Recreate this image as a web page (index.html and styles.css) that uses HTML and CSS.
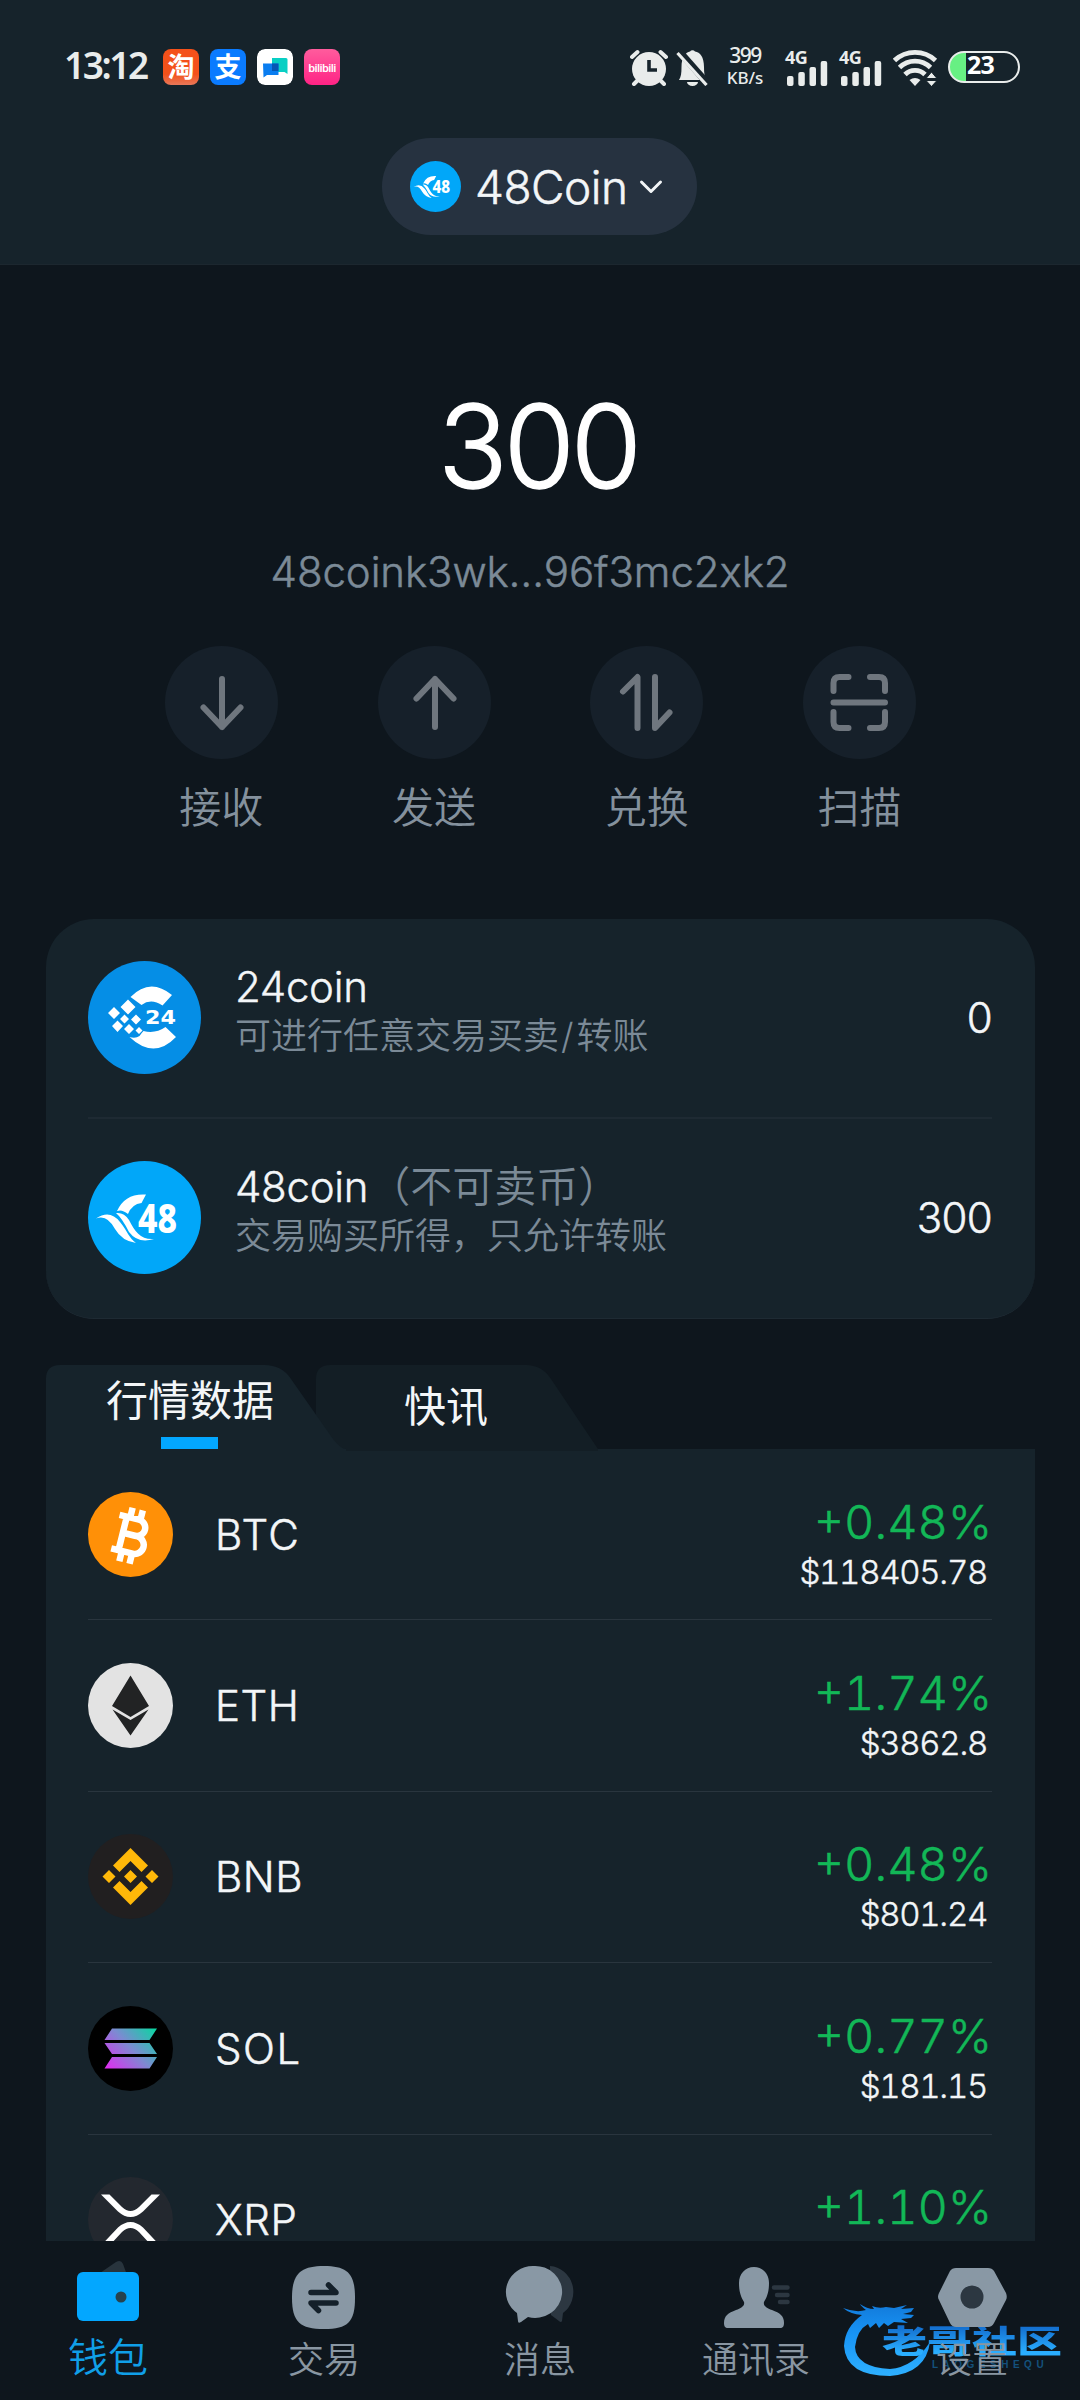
FILE: index.html
```html
<!DOCTYPE html>
<html lang="zh-CN">
<head>
<meta charset="utf-8">
<title>48Coin</title>
<link rel="stylesheet" href="styles.css">
</head>
<body>
<div class="phone">
  <header class="header">
    <div class="status">
      <div class="status-left">
        <span class="clock">13:12</span>
        <span class="app app-tao">淘</span>
        <span class="app app-zhi">支</span>
        <svg class="app" viewBox="0 0 36 36"><rect width="36" height="36" rx="8" fill="#fff"/><path d="M15 9h14a1.500 1.500 0 0 1 1.500 1.500V25l-3-2h-12.500z" fill="#08cfc4"/><path d="M6 14.500h15.500V26H10l-3.500 2.500z" fill="#0a7df0"/><path d="M15 14.500h6.500V22H15z" fill="#0656b4"/></svg>
        <span class="app app-bili">bilibili</span>
      </div>
      <div class="status-right">
        <svg class="alarm" width="38" height="37" viewBox="0 0 38 37"><g stroke="#e9eceb" stroke-width="4" stroke-linecap="round"><path d="M2 8l5.500-5M36 8l-5.500-5M8 31l-4 4M30 31l4 4"/></g><circle cx="19" cy="20" r="17" fill="#e9eceb"/><path d="M19 11v10h8" stroke="#17242c" stroke-width="3.600" fill="none"/></svg>
        <svg class="bell" width="33" height="37" viewBox="0 0 33 37"><path d="M3 31c2-3 2.500-7 2.500-13C5.500 8 10 3 14 2.500a3 3 0 0 1 5 0C24 3 28 8 28 18c0 6 .5 10 2.500 13zM11 33h11a5.500 4 0 0 1-11 0" fill="#e9eceb"/><path d="M3 2l29 33" stroke="#17242c" stroke-width="7"/><path d="M1.500 4l29 32" stroke="#e9eceb" stroke-width="3.200"/></svg>
        <div class="speed"><span class="speed-num">399</span><span class="speed-unit">KB/s</span></div>
        <div class="signal"><span class="net">4G</span><svg width="41" height="25" viewBox="0 0 41 25" fill="#e9eceb"><rect x="0" y="15" width="6.500" height="10" rx="2"/><rect x="11.300" y="11" width="6.500" height="14" rx="2"/><rect x="22.500" y="6" width="6.500" height="19" rx="2"/><rect x="33.700" y="0" width="6.500" height="25" rx="2"/></svg></div>
        <div class="signal"><span class="net">4G</span><svg width="41" height="25" viewBox="0 0 41 25" fill="#e9eceb"><rect x="0" y="15" width="6.500" height="10" rx="2"/><rect x="11.300" y="11" width="6.500" height="14" rx="2"/><rect x="22.500" y="6" width="6.500" height="19" rx="2"/><rect x="33.700" y="0" width="6.500" height="25" rx="2"/></svg></div>
        <svg class="wifi" width="45" height="37" viewBox="0 0 45 37"><g fill="none" stroke="#e9eceb" stroke-width="4.800"><path d="M1.500 11.500a30 30 0 0 1 41 0"/><path d="M6.500 18.500a22 22 0 0 1 31 0"/><path d="M12 25.500a14 14 0 0 1 20 0"/></g><path d="M16.500 31q5.500-4 11 0L22 37z" fill="#e9eceb"/><path d="M33 29.500l5.500-6.500 5.500 6.500zM33 31.500l5.500 6 5.500-6z" fill="#e9eceb" stroke="#17242c" stroke-width="1"/></svg>
        <div class="battery"><span class="battery-text">23</span></div>
      </div>
    </div>
    <div class="wallet-pill">
      <svg class="pill-logo" viewBox="0 0 113 113"><use href="#logo48"/></svg>
      <span class="pill-name">48Coin</span>
      <svg class="pill-arrow" width="24" height="16" viewBox="0 0 24 16"><path d="M2.500 3l9.500 9.500L21.500 3" fill="none" stroke="#f2f5f7" stroke-width="3" stroke-linecap="round" stroke-linejoin="round"/></svg>
    </div>
  </header>

  <main class="main">
    <div class="balance">300</div>
    <div class="address">48coink3wk…96f3mc2xk2</div>
    <div class="actions">
      <div class="action"><svg class="action-icon" viewBox="0 0 113 113"><path d="M57 33v48M38.500 61.500L57 81l18.500-19.500"/></svg><span>接收</span></div>
      <div class="action"><svg class="action-icon" viewBox="0 0 113 113"><path d="M57 81V33M38.500 52.500L57 33l18.500 19.500"/></svg><span>发送</span></div>
      <div class="action"><svg class="action-icon" viewBox="0 0 113 113"><path d="M33 45.500L47.500 31v51M65 31v51l14.500-15.500"/></svg><span>兑换</span></div>
      <div class="action"><svg class="action-icon" viewBox="0 0 113 113"><path d="M30.500 45V37q0-6 6-6h9M67 31h9q6 0 6 6v8M30.500 66v10q0 6 6 6h9M67 82h9q6 0 6-6V66M30.500 56.500h51.500"/></svg><span>扫描</span></div>
    </div>

    <section class="card">
      <div class="asset">
        <svg class="asset-logo" viewBox="0 0 113 113">
          <circle cx="56.500" cy="56.500" r="56.500" fill="#058ee6"/>
          <path d="M42.500 36Q62 16 84 34L74.500 44.500Q63 37 53.500 44zM41.500 76q6 2 10-1 2-3 4-5 12 3 22-4L88 76Q66 99 41.500 76z" fill="#fff"/>
          <path d="M40 38.500l7.500 7.500-7.500 7.500-7.500-7.500zM26 46l6 6-6 6-6-6zM36.500 53.500l4.500 4.500-4.500 4.500L32 58zM48 53.500l5 5-5 5-5-5zM29.500 59.500l5.500 5.500-5.500 6-5.500-6zM41 63l5 5-5 5-5-5zM51 66l3.500 3.500L51 73l-3.500-3.500z" fill="#fff"/>
          <text class="logo24-text" x="57" y="63" textLength="31" lengthAdjust="spacingAndGlyphs">24</text>
        </svg>
        <div class="asset-info"><div class="asset-name">24coin</div><div class="asset-desc">可进行任意交易买卖<span class="slash">/</span>转账</div></div>
        <div class="asset-value">0</div>
      </div>
      <div class="asset">
        <svg class="asset-logo" viewBox="0 0 113 113">
          <g id="logo48">
            <circle cx="56.500" cy="56.500" r="56.500" fill="#01a7f9"/>
            <path d="M29 50Q37 32 58 33.500L53.500 42Q44 43 40 53 34 48 29 50z" fill="#fff"/>
            <path d="M8 57.500Q22 48 32 61c8 10 9 16 16 21Q34 80 27 68 19 53 8 57.500zM28 52q8-1 13 7c6 12 12 20 25 19Q50 83 41 71 34 57 28 52z" fill="#fff"/>
            <text class="logo48-text" x="50" y="71.500" textLength="39" lengthAdjust="spacingAndGlyphs">48</text>
          </g>
        </svg>
        <div class="asset-info"><div class="asset-name">48coin<span class="asset-note">（不可卖币）</span></div><div class="asset-desc">交易购买所得，只允许转账</div></div>
        <div class="asset-value">300</div>
      </div>
    </section>

    <section class="market">
      <div class="tabs">
        <svg class="tabs-shape" width="560" height="86" viewBox="0 0 560 86"><path d="M270 86V14q0-14 14-14H480q16 0 25 14L552 84v2z" fill="#131e25"/><path d="M0 86V14Q0 0 14 0H218q18 0 27 14L287 74q8 10 13 10v2z" fill="#16232b"/></svg>
        <div class="tab tab-active">行情数据</div>
        <div class="tab">快讯</div>
      </div>
      <div class="panel">
        <div class="coin">
          <svg class="coin-logo" viewBox="0 0 85 85"><circle cx="42.500" cy="42.500" r="42.500" fill="#ff9007"/><g transform="rotate(14 42 43)" fill="none" stroke="#fff" stroke-width="6.500"><path d="M27 26H47a8 8 0 0 1 0 16.500H34M34 42.500H49a9 9 0 0 1 0 18H27M34.500 26V60M38 26V16M48.500 26V16M38 60v11M48.500 60v11"/></g></svg>
          <span class="coin-name coin-wide">BTC</span>
          <div class="quote"><span class="change">+0.48%</span><span class="price">$118405.78</span></div>
        </div>
        <div class="coin">
          <svg class="coin-logo" viewBox="0 0 85 85"><circle cx="42.500" cy="42.500" r="42.500" fill="#e3e3e3"/><path d="M42.500 12.500L61 43 42.500 54 24 43zM24.500 46.500l18 10.500 18-10.500-18 26z" fill="#222324"/></svg>
          <span class="coin-name">ETH</span>
          <div class="quote"><span class="change">+1.74%</span><span class="price">$3862.8</span></div>
        </div>
        <div class="coin">
          <svg class="coin-logo" viewBox="0 0 85 85"><circle cx="42.500" cy="42.500" r="42.500" fill="#211f20"/><path d="M42.500 14L60 31.500 53.500 38 42.500 27 31.500 38 25 31.500zM42.500 71L25 53.500 31.500 47l11 11 11-11 6.500 6.500zM21 36l6.500 6.500L21 49l-6.500-6.500zM42.500 36l6.500 6.500-6.500 6.500-6.500-6.500zM64 36l6.500 6.500L64 49l-6.500-6.500z" fill="#ffb809"/></svg>
          <span class="coin-name">BNB</span>
          <div class="quote"><span class="change">+0.48%</span><span class="price">$801.24</span></div>
        </div>
        <div class="coin">
          <svg class="coin-logo" viewBox="0 0 85 85"><defs><linearGradient id="sol" gradientUnits="userSpaceOnUse" x1="20" y1="64" x2="66" y2="20"><stop offset="0" stop-color="#e02df0"/><stop offset=".5" stop-color="#7d8ad2"/><stop offset="1" stop-color="#07d8a0"/></linearGradient></defs><circle cx="42.500" cy="42.500" r="42.500"/><path d="M24 22.500h45l-7.500 11.500H16.500zM16.500 37h45L69 48H24zM24 51h45l-7.500 11.500H16.500z" fill="url(#sol)"/></svg>
          <span class="coin-name coin-wide">SOL</span>
          <div class="quote"><span class="change">+0.77%</span><span class="price">$181.15</span></div>
        </div>
        <div class="coin">
          <svg class="coin-logo" viewBox="0 0 85 85"><circle cx="42.500" cy="42.500" r="42.500" fill="#23282f"/><path d="M13 17.500h8.500L34 30q8.500 8 17 0L63.500 17.500H72L55 34.500q-12.500 11-25 0zM13 68.500h8.500L34 55q8.500-8 17 0l12.500 13.500H72L55 50.500q-12.500-11-25 0z" fill="#fff"/></svg>
          <span class="coin-name">XRP</span>
          <div class="quote"><span class="change">+1.10%</span></div>
        </div>
      </div>
    </section>
  </main>

  <nav class="nav">
    <div class="watermark">
      <svg class="dragon" width="92" height="80" viewBox="0 0 92 80"><defs><linearGradient id="dg" x1="0" y1="0" x2="0" y2="1"><stop offset="0" stop-color="#127ada"/><stop offset=".4" stop-color="#1793f5"/><stop offset="1" stop-color="#2eb0ff"/></linearGradient></defs><path d="M1 7q13 5 23 2-5-4-6-6 7 5 14 5l-2-3q7 3 14 1l8 1 13-3-6 4 13-1-3 4-8 2 11 1-3 3-10 1 7 4-14-1-6 4-4-3-5 5-3-5-6 5-2-4Q15 29 13 46q1 20 35 22 24-2 40-27-4 31-40 34Q4 75 2 45 3 26 20 14 8 13 1 7z" fill="url(#dg)"/></svg>
      <span class="wm-title">老哥社区</span>
      <span class="wm-sub">LAOGESHEQU</span>
    </div>
    <div class="nav-item nav-active"><svg width="70" height="70" viewBox="0 0 70 70"><path d="M27 17L43 6q5-3 7 2l4 11z" fill="#28343d"/><rect x="4" y="16" width="62" height="49" rx="6" fill="#03a7ff"/><circle cx="48" cy="41" r="5.500" fill="#26424e"/></svg><span>钱包</span></div>
    <div class="nav-item"><svg width="70" height="70" viewBox="0 0 70 70"><path d="M35 10C59 10 66 18 66 42S59 73 35 73 3 66 3 42 11 10 35 10z" fill="#8998a5"/><path d="M22 36.500H47L39.500 29M47 47H22l7.500 7.500" fill="none" stroke="#14202a" stroke-width="5.500" stroke-linecap="round" stroke-linejoin="round"/></svg><span>交易</span></div>
    <div class="nav-item"><svg width="70" height="70" viewBox="0 0 70 70"><path d="M45 10a25 26 0 0 1 13 47l-1 8q-1 2-3 0l-8-6z" fill="#2c3741"/><path d="M28 10a27 26 0 1 1-5 51l-7 5q-3 2-3-1l-1-8A27 26 0 0 1 28 10z" fill="#8998a5"/></svg><span>消息</span></div>
    <div class="nav-item"><svg width="70" height="70" viewBox="0 0 70 70"><path d="M33 11c9 0 15 7 15 16s-2 14-5 19c-1 4 3 6 8 8 8 3 12 6 12 13 0 3-1 5-4 5H7c-3 0-4-2-4-5 0-7 4-10 12-13 5-2 9-4 8-8-3-5-5-10-5-19s6-16 15-16z" fill="#8998a5"/><path d="M53 31.500h13.500M56 39h10.500M59 46h7.500" stroke="#2c3741" stroke-width="4.500" stroke-linecap="round"/></svg><span>通讯录</span></div>
    <div class="nav-item"><svg width="70" height="70" viewBox="0 0 70 70"><path d="M19 12H51q4 0 6 3L69 37q1.500 4 0 7L57 67q-2 4-6 4H19q-4 0-6-4L2 44q-2-3 0-7L13 15q2-3 6-3z" fill="#8998a5"/><circle cx="35" cy="41" r="11.500" fill="#2c3741"/></svg><span>设置</span></div>
  </nav>
</div>
</body>
</html>
```
FILE: styles.css
```css
* { box-sizing: border-box; }

body {
  margin: 0;
  background: #0e161d;
  color: #f3f6f8;
  font-family: Inter, "Noto Sans CJK SC", sans-serif;
  font-weight: 350;
}

.phone {
  width: 1080px;
  height: 2400px;
  display: flex;
  flex-direction: column;
  overflow: hidden;
}

/* Header */
.header {
  height: 265px;
  flex: none;
  background: #16232b;
  border-bottom: 1px solid #1c272f;
}
.status {
  height: 138px;
  padding: 0 60px 0 64px;
  display: flex;
  justify-content: space-between;
}
.status-left { display: flex; padding-top: 49px; gap: 11px; }
.clock {
  width: 89px;
  margin-right: -1px;
  font: 600 37px/32px "Noto Sans", sans-serif;
  letter-spacing: -2.4px;
  color: #e9eceb;
}
.app {
  width: 36px;
  height: 36px;
  border-radius: 8px;
  color: #fff;
  text-align: center;
}
.app-tao { background: linear-gradient(#f4511a 70%, #e8785a); font: 700 27px/33px "Noto Sans CJK SC", sans-serif; }
.app-zhi { background: #0a7bff; font: 700 27px/33px "Noto Sans CJK SC", sans-serif; }
.app-bili { background: linear-gradient(#ff5c9d, #ff2385); font: 600 11px/38px "Noto Sans", sans-serif; letter-spacing: -.6px; }

.status-right { display: flex; padding-top: 49px; color: #e9eceb; }
.bell { margin-left: 8px; }
.speed {
  width: 48px;
  margin: -5px 0 0 12px;
  display: flex;
  flex-direction: column;
  text-align: center;
  font-family: "Noto Sans", sans-serif;
  font-weight: 500;
}
.speed-num { font-size: 21px; line-height: 22px; letter-spacing: -1.5px; }
.speed-unit { font-size: 17px; line-height: 24px; }
.signal {
  width: 54px;
  height: 37px;
  padding-left: 18px;
  display: grid;
}
.signal > * { grid-area: 1 / 1; }
.signal svg { align-self: end; }
.net { font: 700 18px/16px "Noto Sans", sans-serif; margin-left: -2px; letter-spacing: -.5px; }
.wifi { margin-left: 16px; }
.battery {
  width: 72px;
  height: 32px;
  margin: 2px 0 0 10px;
  border: 2px solid #e9eceb;
  border-radius: 16px;
  background: linear-gradient(90deg, #67f083 16px, transparent 16px);
}
.battery-text { display: block; padding-left: 17px; font: 700 25px/22px "Noto Sans", sans-serif; letter-spacing: -.8px; color: #fff; }

.wallet-pill {
  width: 315px;
  height: 97px;
  margin: 0 auto 0 382px;
  padding: 0 34px 0 28px;
  display: flex;
  align-items: center;
  border-radius: 49px;
  background: #263240;
}
.pill-logo { width: 51px; height: 51px; flex: none; }
.pill-name { margin-left: 14px; width: 152px; font-size: 46px; line-height: 60px; letter-spacing: -.5px; white-space: nowrap; }
.pill-arrow { margin-left: 12px; flex: none; }

/* The light Latin face gets a hairline outline to reach a book weight */
.pill-name, .address, .asset-value, .coin-name, .change { -webkit-text-stroke: .5px currentColor; }
.asset-name, .price { -webkit-text-stroke: .4px currentColor; }

/* Balance */
.main { height: 1976px; flex: none; overflow: hidden; }
.balance { margin-top: 117px; padding-right: 4px; text-align: center; font-size: 115px; line-height: 130px; letter-spacing: -4px; color: #fff; -webkit-text-stroke: 1.500px currentColor; }
.address { margin: 30px 20px 0 0; text-align: center; font-size: 42px; line-height: 60px; letter-spacing: -.1px; color: #7b8a97; }
.actions { margin: 44px 114px 0 115px; display: grid; grid-template-columns: repeat(4, 1fr); }
.action { display: flex; flex-direction: column; align-items: center; font-size: 42px; line-height: 60px; color: #84919d; }
.action span { margin-top: 19px; }
.action-icon {
  width: 113px;
  height: 113px;
  border-radius: 50%;
  background: #16202a;
  fill: none;
  stroke: #6f767e;
  stroke-width: 6;
  stroke-linecap: round;
  stroke-linejoin: round;
}

/* Assets */
.card {
  margin: 81px 45px 0 46px;
  height: 400px;
  padding: 0 43px 0 42px;
  border-radius: 48px;
  background: #16232b;
  border-bottom: 1px solid #1e2a33;
}
.asset { height: 200px; padding-top: 42px; display: flex; border-bottom: 2px solid #1e2a33; }
.asset:last-child { border-bottom: 0; }
.asset-logo { width: 113px; height: 113px; flex: none; }
.logo24-text { font: 700 20px "DejaVu Sans", sans-serif; fill: #fff; }
.logo48-text { font: 800 41px "Noto Sans", sans-serif; fill: #fff; }
.asset-info { margin: 1px 0 0 34px; flex: 1; }
.asset-name { height: 50px; font-size: 42px; line-height: 50px; letter-spacing: -.3px; white-space: nowrap; }
.asset-note { letter-spacing: 0; color: #7b8a97; -webkit-text-stroke: 0; }
.asset-desc { height: 48px; font-size: 36px; line-height: 48px; color: #7b8a97; }
.slash { margin: 0 3px 0 2px; }
.asset-value { font-size: 42px; line-height: 113px; letter-spacing: -.7px; }

/* Market */
.market { margin: 46px 45px 0 46px; }
.tabs { position: relative; height: 84px; display: flex; }
.tabs-shape { position: absolute; left: 0; top: 0; }
.tab { position: relative; width: 224px; text-align: center; font-size: 42px; font-weight: 400; line-height: 84px; }
.tab-active { width: 288px; line-height: 72px; }
.tab-active::after {
  content: "";
  position: absolute;
  left: 115px;
  bottom: 0;
  width: 57px;
  height: 12px;
  background: #03a7ff;
}
.panel { padding: 0 43px 0 42px; background: #16232b; }
.coin { height: 171.4px; display: flex; align-items: center; border-bottom: 1px solid #29353e; }
.coin-logo { width: 85px; height: 85px; flex: none; }
.coin-name { margin-left: 42px; flex: 1; font-size: 42px; letter-spacing: .5px; }
.coin-wide { letter-spacing: 1.5px; }
.quote {
  height: 100px;
  margin-top: 21px;
  display: flex;
  flex-direction: column;
  align-items: flex-end;
  font-variant-numeric: tabular-nums;
}
.change { font-size: 47px; line-height: 54px; color: #12b757; }
.price { margin-right: 5px; font-size: 33px; line-height: 46px; letter-spacing: -1.3px; }

/* Bottom navigation */
.nav { position: relative; height: 159px; flex: none; display: grid; grid-template-columns: repeat(5, 216px); background: #0e161d; }
.nav-item { position: relative; padding-top: 15px; display: flex; flex-direction: column; align-items: center; font-size: 36px; line-height: 50px; color: #8996a2; }
.nav-item svg { overflow: visible; }
.nav-item span { margin-top: 9px; }
.nav-active { font-size: 40px; color: #109fe8; }
.nav-active span { margin-top: 7px; }
.watermark { position: absolute; left: 842px; top: 60px; width: 230px; height: 80px; }
.dragon { position: absolute; left: 0; top: 0; }
.wm-title {
  position: absolute;
  left: 40px;
  top: 14px;
  font: 900 45px/50px "Noto Sans CJK SC", sans-serif;
  color: transparent;
  background: linear-gradient(#1470d0 15%, #2aaeff 85%);
  -webkit-background-clip: text;
  background-clip: text;
  transform: scaleY(.7);
}
.wm-sub { position: absolute; left: 90px; top: 58px; font: 700 10px/12px "Liberation Sans", sans-serif; letter-spacing: 4.500px; color: #14517c; }
```
